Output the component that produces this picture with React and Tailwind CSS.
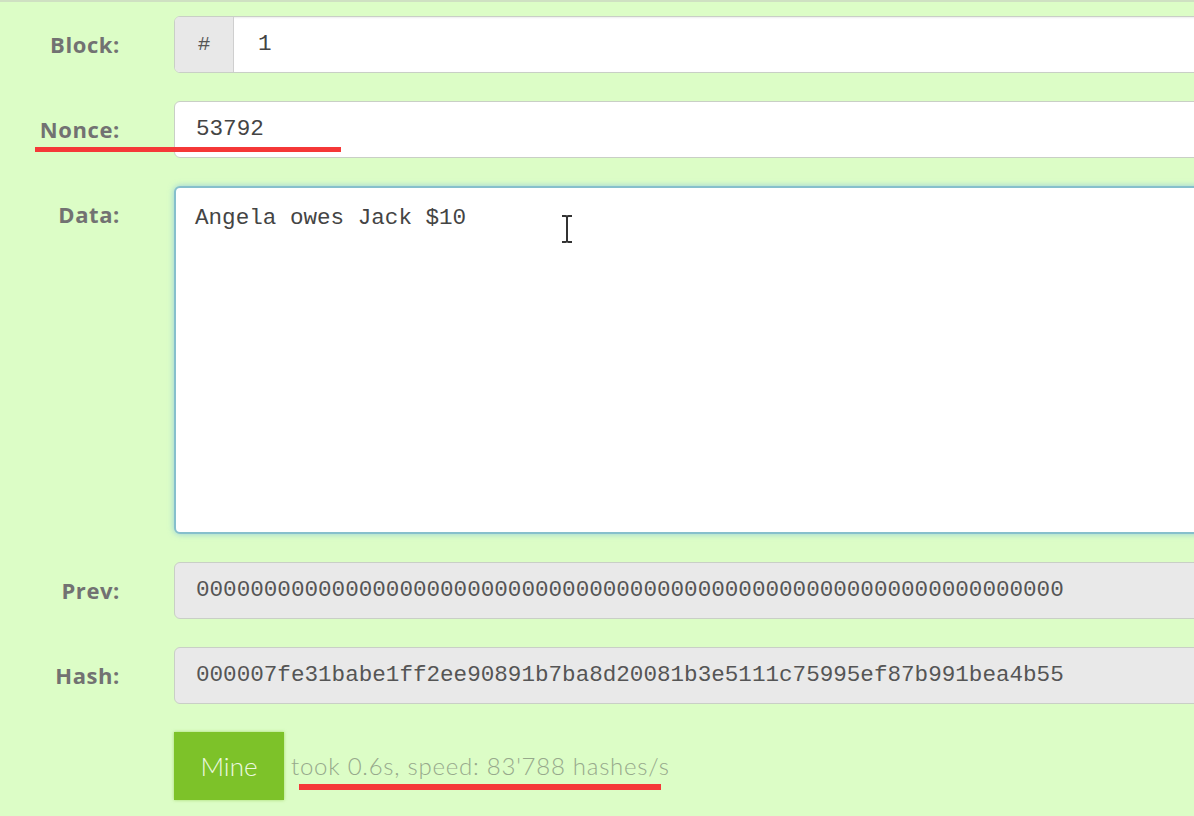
import React from 'react';

const mono = { fontFamily: '"Liberation Mono", "Courier New", monospace' };

function Label({ children, top }) {
  return (
    <div
      className={`w-[120px] shrink-0 text-right text-[22px] font-bold tracking-[0.6px] text-[#727272] ${
        top ? 'pt-[12px]' : 'self-center'
      }`}
      style={{ fontFamily: '"Open Sans", sans-serif' }}
    >
      {children}
    </div>
  );
}

function Row({ label, top, children, underline }) {
  return (
    <div className="relative flex gap-[54px]">
      <Label top={top}>{label}</Label>
      {children}
      {underline}
    </div>
  );
}

export default function App() {
  return (
    <div className="relative h-[816px] w-[1194px] overflow-hidden border-t-2 border-[#cfe0c2] bg-[#dcfdc6]">
      <div className="flex flex-col gap-[28px] pt-[14px]">
        <Row label="Block:">
          <div className="flex h-[57px] w-[1060px] shrink-0 overflow-hidden rounded-[6px] border border-[#c9cfc6] bg-white shadow-[inset_0_1px_2px_rgba(0,0,0,0.08)]">
            <div
              className="flex w-[59px] items-center justify-center border-r border-[#cfcfcf] bg-[#e8e8e8] text-[21px] text-[#555]"
              style={mono}
            >
              #
            </div>
            <div className="flex items-center pl-[24px] text-[22.6px] text-[#444]" style={mono}>
              1
            </div>
          </div>
        </Row>

        <Row
          label="Nonce:"
          underline={<div className="absolute left-[35px] top-[46px] h-[5px] w-[306px] bg-[#f53838]" />}
        >
          <div
            className="flex h-[57px] w-[1060px] shrink-0 items-center rounded-[6px] border border-[#c9cfc6] bg-white pl-[21px] text-[22.6px] text-[#444]"
            style={mono}
          >
            53792
          </div>
        </Row>

        <Row label="Data:" top>
          <div className="relative h-[348px] w-[1060px] shrink-0 rounded-[6px] border-2 border-[#86bfcc] bg-white shadow-[0_0_6px_rgba(102,175,233,0.6)]">
            <div className="pl-[19px] pt-[14px] text-[22.6px] text-[#444]" style={mono}>
              Angela owes Jack $10
            </div>
            <svg
              className="absolute left-[384px] top-[26px]"
              width="14"
              height="30"
              viewBox="0 0 14 30"
              fill="none"
              stroke="#333"
              strokeWidth="2"
            >
              <path d="M2 2h3.5a1.5 1.5 0 0 1 1.5 1.5V26.5A1.5 1.5 0 0 1 5.5 28H2M12 2H8.5A1.5 1.5 0 0 0 7 3.5M12 28H8.5A1.5 1.5 0 0 1 7 26.5" />
            </svg>
          </div>
        </Row>

        <Row label="Prev:">
          <div
            className="flex h-[57px] w-[1060px] shrink-0 items-center rounded-[6px] border border-[#c9cfc6] bg-[#e9e9e9] pl-[21px] text-[22.6px] text-[#555]"
            style={mono}
          >
            0000000000000000000000000000000000000000000000000000000000000000
          </div>
        </Row>

        <Row label="Hash:">
          <div
            className="flex h-[57px] w-[1060px] shrink-0 items-center rounded-[6px] border border-[#c9cfc6] bg-[#e9e9e9] pl-[21px] text-[22.6px] text-[#555]"
            style={mono}
          >
            000007fe31babe1ff2ee90891b7ba8d20081b3e5111c75995ef87b991bea4b55
          </div>
        </Row>

        <div className="relative flex items-center gap-[54px]">
          <div className="w-[120px] shrink-0" />
          <div className="flex items-center">
            <div
              className="flex h-[68px] w-[110px] items-center justify-center bg-[#7dc229] text-[26px] font-light text-[#eef9e0] shadow-[0_0_3px_rgba(125,194,41,0.6)]"
              style={{ fontFamily: 'Lato, sans-serif' }}
            >
              Mine
            </div>
            <div
              className="pl-[7px] text-[24px] font-light tracking-[0.75px] text-[#97a98c]"
              style={{ fontFamily: 'Lato, sans-serif' }}
            >
              took 0.6s, speed: 83'788 hashes/s
            </div>
          </div>
          <div className="absolute left-[299px] top-[52px] h-[6px] w-[362px] bg-[#f53838]" />
        </div>
      </div>
    </div>
  );
}
